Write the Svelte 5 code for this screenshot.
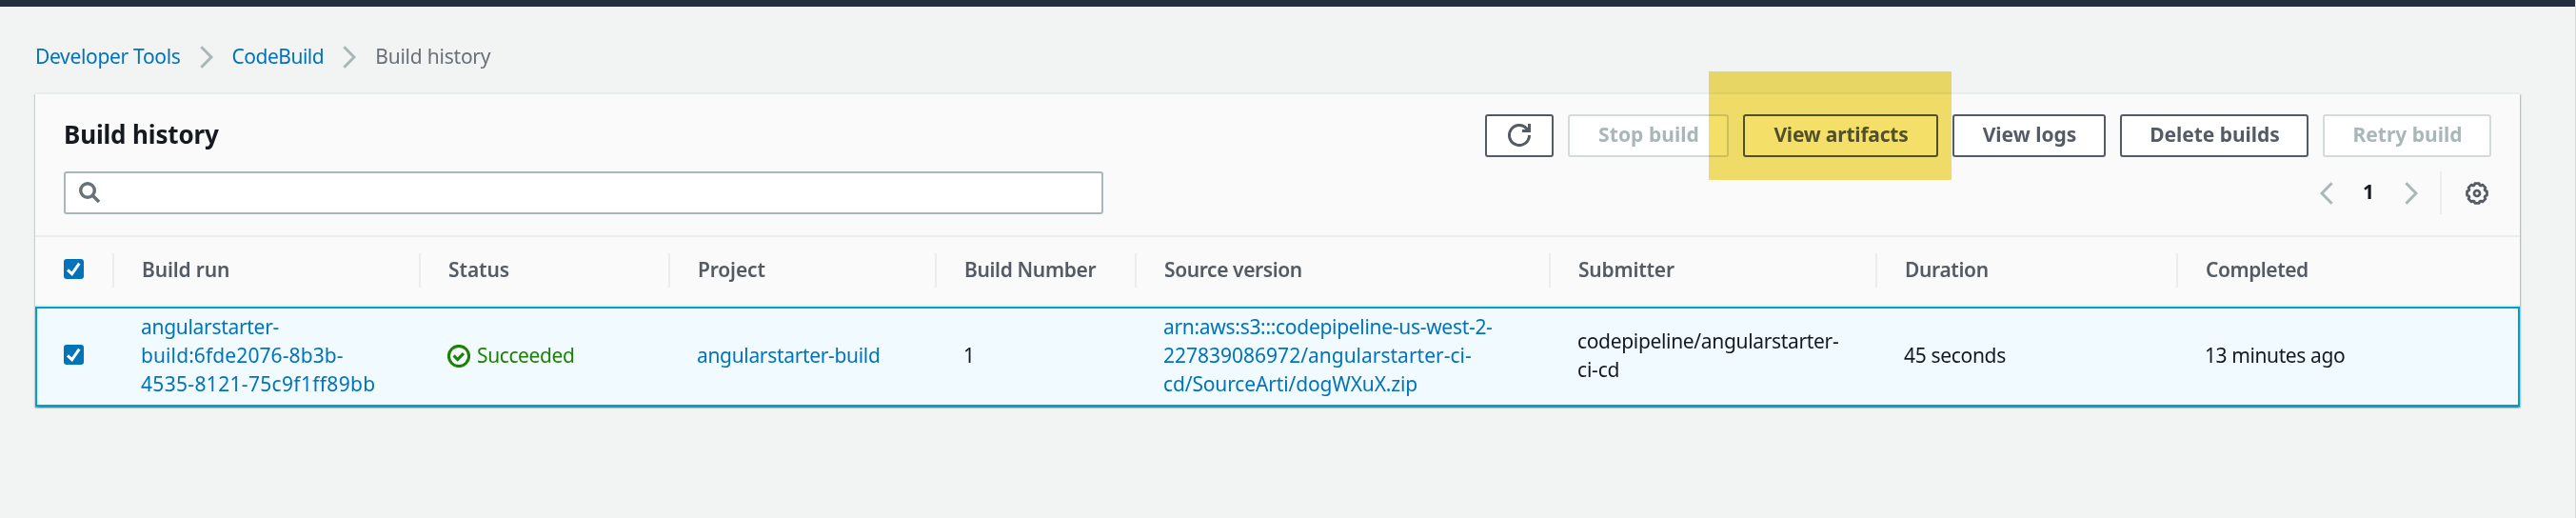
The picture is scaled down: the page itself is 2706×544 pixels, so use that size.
<script>
  const crumbs = [
    { text: 'Developer Tools', ls: -0.32, link: true },
    { text: 'CodeBuild', ls: -0.5, link: true },
    { text: 'Build history', ls: -0.22, link: false }
  ];

  const actions = [
    { text: 'Stop build', width: 169, ls: 0.05, disabled: true },
    { text: 'View artifacts', width: 205, ls: -0.2 },
    { text: 'View logs', width: 161, ls: 0 },
    { text: 'Delete builds', width: 198, ls: -0.05 },
    { text: 'Retry build', width: 177, ls: 0, disabled: true }
  ];

  const columns = [
    { title: 'Build run', ls: -0.15, kind: 'link', lines: [['angularstarter-', -0.3], ['build:6fde2076-8b3b-', 0.1], ['4535-8121-75c9f1ff89bb', 0.33]] },
    { title: 'Status', ls: -0.1, kind: 'status', lines: [['Succeeded', -0.4]] },
    { title: 'Project', ls: -0.15, kind: 'link', lines: [['angularstarter-build', -0.33]] },
    { title: 'Build Number', ls: -0.36, kind: 'text', lines: [['1', 0]] },
    { title: 'Source version', ls: -0.4, kind: 'link', lines: [['arn:aws:s3:::codepipeline-us-west-2-', -0.3], ['227839086972/angularstarter-ci-', 0], ['cd/SourceArti/dogWXuX.zip', -0.14]] },
    { title: 'Submitter', ls: -0.2, kind: 'text', lines: [['codepipeline/angularstarter-', -0.33], ['ci-cd', -0.2]] },
    { title: 'Duration', ls: -0.35, kind: 'text', lines: [['45 seconds', -0.32]] },
    { title: 'Completed', ls: -0.45, kind: 'text', lines: [['13 minutes ago', -0.4]] }
  ];

  // Eight-toothed outline: each tooth has a flat top and slopes into the valley.
  const gear = Array.from({ length: 8 }, (_, i) =>
    [[-12, 10.7], [12, 10.7], [18, 9], [27, 9]].map(([deg, r]) => {
      const a = ((i * 45 + deg) * Math.PI) / 180;
      return `${(12 + r * Math.sin(a)).toFixed(2)},${(12 - r * Math.cos(a)).toFixed(2)}`;
    }).join(' ')
  ).join(' ');
</script>

{#snippet chevron(left)}
  <svg class="chevron" width="14" height="24" viewBox="0 0 14 24">
    <path d={left ? 'M12.6 1.2 2 12l10.6 10.8' : 'M1.4 1.2 12 12 1.4 22.8'} />
  </svg>
{/snippet}

{#snippet checkbox()}
  <span class="checkbox">
    <svg width="21" height="21" viewBox="0 0 21 21"><path d="M4 11.3 8.6 15.6 16.3 4.6" /></svg>
  </span>
{/snippet}

<div class="page">
  <header class="topbar"></header>
  <nav class="crumbs">
    {#each crumbs as c, i}
      {#if i}{@render chevron(false)}{/if}
      <span class:link={c.link} style:letter-spacing="{c.ls}px">{c.text}</span>
    {/each}
  </nav>

  <section class="panel">
    <div class="toolbar">
      <h1>Build history</h1>
      <div class="actions">
        <button class="refresh" aria-label="Refresh">
          <svg width="24" height="24" viewBox="0 0 24 24">
            <path d="M22.5 12A10.5 10.5 0 1 1 19.7 4.9L22.2 7.5" />
            <path d="M15 7.5H22.5V0" />
          </svg>
        </button>
        {#each actions as a}
          <button disabled={a.disabled} style:width="{a.width}px" style:letter-spacing="{a.ls}px">{a.text}</button>
        {/each}
      </div>
    </div>
    <div class="filters">
      <div class="search">
        <svg width="22" height="22" viewBox="0 0 22 22">
          <circle cx="9" cy="9" r="7.3" /><path d="M14.2 14.2 21 21" />
        </svg>
      </div>
      <div class="pager">
        {@render chevron(true)}
        <b>1</b>
        {@render chevron(false)}
        <i class="rule"></i>
        <svg class="gear" width="24" height="24" viewBox="0 0 24 24">
          <polygon points={gear} /><circle cx="12" cy="12" r="3" />
        </svg>
      </div>
    </div>

    <div class="grid head">
      <div class="cell check">{@render checkbox()}</div>
      {#each columns as c}
        <div class="cell"><span style:letter-spacing="{c.ls}px">{c.title}</span></div>
      {/each}
    </div>
    <div class="grid row">
      <div class="cell check">{@render checkbox()}</div>
      {#each columns as c}
        <div class="cell {c.kind}">
          {#if c.kind === 'status'}
            <svg width="24" height="24" viewBox="0 0 24 24">
              <circle cx="12" cy="12" r="10.6" /><path d="M6.6 11.4 10.7 15.5 17 9.1" />
            </svg>
          {/if}
          <div>
            {#each c.lines as [text, ls]}
              <p style:letter-spacing="{ls}px">{text}</p>
            {/each}
          </div>
        </div>
      {/each}
    </div>
  </section>
  <div class="highlight"></div>
</div>

<style>
  :global(body) {
    background: #f2f3f3;
  }
  .page {
    position: relative;
    box-sizing: border-box;
    height: 544px;
    overflow: hidden;
    background: #f2f3f3;
    font: 400 21px/30px 'Noto Sans', sans-serif;
    color: #16191f;
    border-right: 1px solid #dadcdc;
  }
  .topbar {
    height: 7px;
    margin-right: -1px;
    background: #232f3e;
  }
  .crumbs {
    display: flex;
    align-items: center;
    gap: 20px;
    height: 30px;
    margin: 37px 0 23px 37px;
    color: #687078;
    white-space: nowrap;
  }
  .link {
    color: #0073bb;
  }
  svg {
    display: block;
    flex: none;
    fill: none;
  }
  .chevron {
    stroke: #aab7b8;
    stroke-width: 3;
  }
  .crumbs .chevron {
    margin-top: 2px;
  }
  .panel {
    box-sizing: border-box;
    width: 2610px;
    height: 330px;
    margin-left: 37px;
    border-top: 2px solid #eaeded;
    background: #fafafa;
    box-shadow: 0 1.5px 1.5px rgba(0, 28, 36, 0.35), 1.5px 1.5px 1.5px rgba(0, 28, 36, 0.17), -1.5px 1.5px 1.5px rgba(0, 28, 36, 0.17);
  }
  .toolbar {
    display: flex;
    justify-content: space-between;
    align-items: center;
    padding: 21px 30px 0;
    height: 45px;
  }
  h1 {
    margin: 0 0 3px;
    font-size: 26px;
    line-height: 30px;
    letter-spacing: -0.15px;
  }
  .actions {
    display: flex;
    gap: 15px;
  }
  button {
    display: flex;
    align-items: center;
    justify-content: center;
    box-sizing: border-box;
    height: 45px;
    padding: 0 0 3px 1px;
    border: 2px solid #545b64;
    border-radius: 3px;
    background: #fff;
    color: #545b64;
    font: 700 21px/30px 'Noto Sans', sans-serif;
    white-space: nowrap;
  }
  button:disabled {
    border-color: #d5dbdb;
    color: #aab7b8;
  }
  .refresh {
    width: 72px;
    padding: 0 0 1px;
  }
  .refresh svg {
    stroke: #545b64;
    stroke-width: 3;
  }
  .filters {
    display: flex;
    justify-content: space-between;
    padding: 15px 33px 22px 30px;
    border-bottom: 2px solid #eaeded;
  }
  .search {
    display: flex;
    align-items: center;
    box-sizing: border-box;
    width: 1092px;
    height: 45px;
    padding: 0 0 1px 14px;
    border: 2px solid #aab7b8;
    border-radius: 3px;
    background: #fff;
  }
  .search svg {
    stroke: #687078;
    stroke-width: 3.4;
  }
  .pager {
    display: flex;
    align-items: center;
    height: 45px;
  }
  .pager b {
    width: 12px;
    margin: 0 32px 3px 31px;
  }
  .rule {
    width: 2px;
    height: 45px;
    margin: 0 25px 0 23px;
    background: #eaeded;
  }
  .gear {
    stroke: #545b64;
    stroke-width: 2.7;
    stroke-linejoin: round;
  }
  .grid {
    display: grid;
    grid-template-columns: 83px 322px 262px 280px 210px 435px 343px 316px 359px;
    box-sizing: border-box;
  }
  .head {
    height: 73px;
    padding-top: 17px;
    border-bottom: 2px solid #eaeded;
    color: #545b64;
    font-weight: 600;
  }
  .cell {
    display: flex;
    align-items: center;
    box-sizing: border-box;
    padding-left: 28px;
    white-space: nowrap;
  }
  .head .cell {
    height: 36px;
    padding-left: 29px;
    border-right: 2px solid #eaeded;
    padding-bottom: 2px;
  }
  .head .cell:last-child {
    border-right: 0;
  }
  .grid .cell.check {
    padding-left: 30px;
  }
  .head .cell.check {
    padding-bottom: 3px;
  }
  .row .cell.check {
    padding-bottom: 1px;
  }
  .row {
    height: 105px;
    background: #f1faff;
    box-shadow: inset 0 0 0 2px #00a1c9;
    padding-bottom: 3px;
  }
  .status {
    gap: 7px;
    color: #1d8102;
  }
  .status svg {
    margin-top: 2px;
    stroke: #1d8102;
    stroke-width: 3;
  }
  p {
    margin: 0;
  }
  .checkbox {
    width: 21px;
    height: 21px;
    border-radius: 3px;
    background: #0073bb;
  }
  .checkbox svg {
    stroke: #fff;
    stroke-width: 3;
  }
  .highlight {
    position: absolute;
    left: 1795px;
    top: 75px;
    width: 255px;
    height: 114px;
    background: #f4e069;
    mix-blend-mode: multiply;
  }
</style>
